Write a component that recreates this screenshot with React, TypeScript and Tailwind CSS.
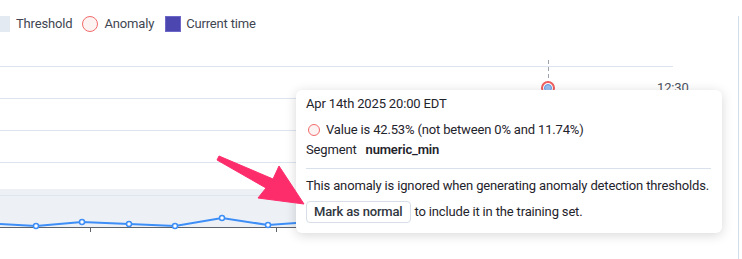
import React from 'react';

const points: [number, number][] = [
    [0, 224], [36, 226], [82, 222], [129, 224], [175, 226], [222, 218], [268, 225], [296, 223],
];

const Legend: React.FC = () => (
    <div className="flex items-center h-4 mt-[16px] text-[13px] leading-4 text-[#3f4652]">
        <span className="w-4 h-4 -ml-[6px] bg-[#e3eaf2]" />
        <span className="ml-[6px]">Threshold</span>
        <span className="ml-[10px] w-4 h-4 rounded-full border border-[#f26b6b] bg-[#fdf3f3]" />
        <span className="ml-[6px]">Anomaly</span>
        <span className="ml-[11px] w-4 h-4 bg-[#4c46b0] border border-[#6d68c7]" />
        <span className="ml-[5px]">Current time</span>
    </div>
);

const Chart: React.FC = () => (
    <svg className="block mt-[14px]" width={738} height={213} viewBox="0 46 738 213">
        <rect x={0} y={189} width={673} height={38} fill="#edf1f5" />
        {[66, 98, 130, 162, 195].map((y) => (
            <line key={y} x1={0} x2={673} y1={y + 0.5} y2={y + 0.5} stroke="#dde5ef" strokeWidth={1} />
        ))}
        <line x1={0} x2={673} y1={227.5} y2={227.5} stroke="#5d636d" strokeWidth={1} />
        <line x1={90.5} x2={90.5} y1={227} y2={232} stroke="#5d636d" strokeWidth={1} />
        <line x1={276.5} x2={276.5} y1={227} y2={232} stroke="#5d636d" strokeWidth={1} />
        <polyline
            points={points.map((p) => p.join(',')).join(' ')}
            fill="none"
            stroke="#3e8ef7"
            strokeWidth={2}
        />
        {points.slice(1, 7).map(([x, y]) => (
            <circle key={x} cx={x} cy={y} r={2.5} fill="#fff" stroke="#3e8ef7" strokeWidth={1.5} />
        ))}
        <line x1={548.5} x2={548.5} y1={60} y2={82} stroke="#9aa3ae" strokeWidth={1} strokeDasharray="4 3" />
        <circle cx={548} cy={88} r={6} fill="#fff" stroke="#ef5d5d" strokeWidth={2} />
        <circle cx={548} cy={88} r={3.5} fill="#9cc2f0" stroke="#5f9be8" strokeWidth={1} />
        <text x={657} y={92} fontSize={13} fill="#4b5260" fontFamily="Roboto, sans-serif">12:30</text>
    </svg>
);

const Tooltip: React.FC = () => (
    <div className="absolute left-[296px] top-[90px] w-[426px] bg-white rounded-md shadow-[0_2px_12px_rgba(0,0,0,0.16)] px-[10px] pt-[4px] pb-[10px] text-[13px] text-[#1f242c] whitespace-nowrap">
        <div className="leading-5">Apr 14th 2025 20:00 EDT</div>
        <div className="flex items-center h-5 mt-[6px]">
            <span className="ml-[2px] w-3 h-3 rounded-full border border-[#f26b6b] bg-[#fdf3f3]" />
            <span className="ml-[6px]">Value is 42.53% (not between 0% and 11.74%)</span>
        </div>
        <div className="flex items-center h-5">
            <span>Segment</span>
            <span className="ml-[9px] font-semibold">numeric_min</span>
        </div>
        <div className="mt-[8px] mr-px h-px bg-[#d9e2ec]" />
        <div className="mt-[7px] leading-5">This anomaly is ignored when generating anomaly detection thresholds.</div>
        <div className="flex items-center mt-[5px]">
            <button className="h-[22px] px-[7px] rounded border border-[#d7dee7] bg-white text-[13px] font-medium text-[#2f3640]">
                Mark as normal
            </button>
            <span className="ml-[4px]">to include it in the training set.</span>
        </div>
    </div>
);

const Arrow: React.FC = () => (
    <svg className="absolute left-0 top-0 pointer-events-none" width={742} height={259}>
        <polygon
            points="219,156 273,179 279,166 304,204 258,198 266,188 217,160"
            fill="#fd2d6c"
            stroke="#fd2d6c"
            strokeWidth={1}
            strokeLinejoin="round"
        />
    </svg>
);

const App: React.FC = () => {
    return (
        <div className="relative w-[742px] h-[259px] overflow-hidden bg-white font-['Roboto',sans-serif] tracking-[-0.01em]">
            <div className="w-[739px] h-full border-r border-[#d3dde9]">
                <Legend />
                <Chart />
            </div>
            <Tooltip />
            <Arrow />
        </div>
    );
};

export default App;
